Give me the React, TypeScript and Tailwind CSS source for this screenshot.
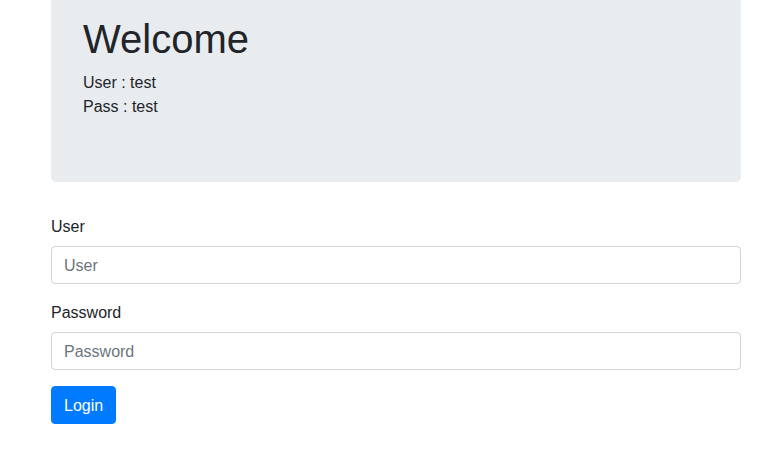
import { useState } from "react";

export default function App() {
  const [user, setUser] = useState("");
  const [pass, setPass] = useState("");

  return (
    <div className="min-h-screen bg-white text-[#212529] font-['Liberation_Sans',Arial,sans-serif] text-base leading-6">
      <div className="ml-[51px] w-[690px]">
        <div className="bg-[#e9ecef] rounded-b-[5px] px-8 pt-[15px] pb-[63px] mb-8">
          <h1 className="text-[40px] leading-[48px] font-normal mb-2">Welcome</h1>
          <p>
            User : test
            <br />
            Pass : test
          </p>
        </div>

        <form onSubmit={(e) => e.preventDefault()}>
          <div className="mb-4">
            <label className="block leading-[26px] mb-[6px]">User</label>
            <input
              className="block w-full h-[38px] px-3 pt-[7px] pb-[5px] border border-[#ced4da] rounded-[4px] placeholder:text-[#6c757d] outline-none"
              placeholder="User"
              value={user}
              onChange={(e) => setUser(e.target.value)}
            />
          </div>
          <div className="mb-4">
            <label className="block leading-[26px] mb-[6px]">Password</label>
            <input
              type="password"
              className="block w-full h-[38px] px-3 pt-[7px] pb-[5px] border border-[#ced4da] rounded-[4px] placeholder:text-[#6c757d] outline-none"
              placeholder="Password"
              value={pass}
              onChange={(e) => setPass(e.target.value)}
            />
          </div>
          <button
            type="submit"
            className="h-[38px] px-3 pt-[2px] bg-[#007bff] border border-[#007bff] text-white rounded-[4px]"
          >
            Login
          </button>
        </form>
      </div>
    </div>
  );
}
